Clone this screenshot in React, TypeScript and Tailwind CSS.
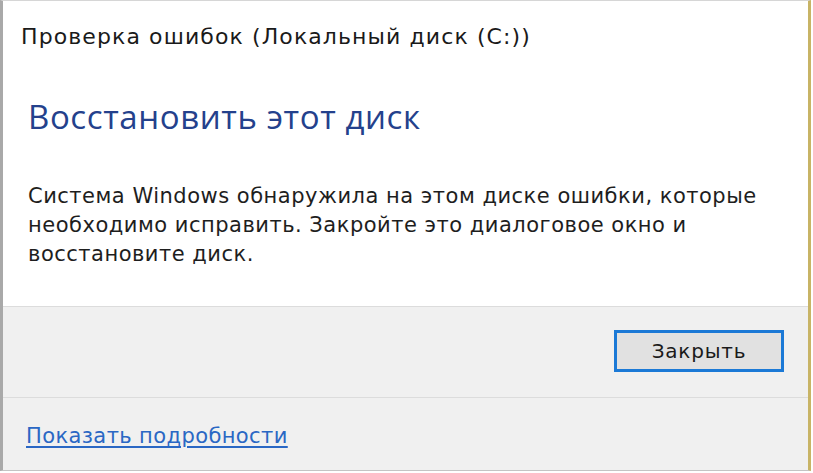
import React from 'react';

const uiFont = { fontFamily: '"DejaVu Sans", "Noto Sans", sans-serif' };
const headFont = { fontFamily: '"Open Sans", "Noto Sans", sans-serif' };

const App: React.FC = () => {
  return (
    <div className="w-[813px] h-[473px] bg-white overflow-hidden" style={uiFont}>
      <div className="flex flex-col w-[811px] h-[471px] border-l-[3px] border-l-[#a9a9a9] border-t border-t-[#d6d6d6] border-r-[3px] border-r-[#c8b466] border-b border-b-[#c4c4c4]">
        {/* Content */}
        <div className="h-[305px] bg-white pl-[18px] pt-[22px]">
          <div className="text-[22px] leading-[28px] tracking-[1.1px] text-[#1a1a1a]">
            Проверка ошибок (Локальный диск (C:))
          </div>
          <h1 className="mt-[46px] ml-[7px] text-[33px] leading-[40px] tracking-[0.6px] text-[#24418c]" style={headFont}>
            Восстановить этот диск
          </h1>
          <p className="mt-[45px] ml-[7px] w-[750px] text-[21px] leading-[29px] tracking-[0.5px] text-[#1e1e1e]">
            Система Windows обнаружила на этом диске ошибки, которые необходимо исправить. Закройте это диалоговое окно и восстановите диск.
          </p>
        </div>

        {/* Buttons */}
        <div className="h-[91px] flex justify-end items-start pt-[23px] pr-[24px] bg-[#f0f0f0] border-t border-t-[#dcdcdc]">
          <button className="w-[170px] h-[42px] bg-[#e1e1e1] border-[3px] border-[#1b79d6] text-[20px] tracking-[0.8px] text-[#1a1a1a]">
            Закрыть
          </button>
        </div>

        {/* Footer */}
        <div className="flex-1 flex items-start pt-[25px] pl-[23px] bg-[#f0f0f0] border-t border-t-[#dcdcdc]">
          <a href="#" className="text-[21px] leading-[27px] tracking-[0.4px] text-[#2a67c4] underline underline-offset-[3px]">
            Показать подробности
          </a>
        </div>
      </div>
    </div>
  );
};

export default App;
